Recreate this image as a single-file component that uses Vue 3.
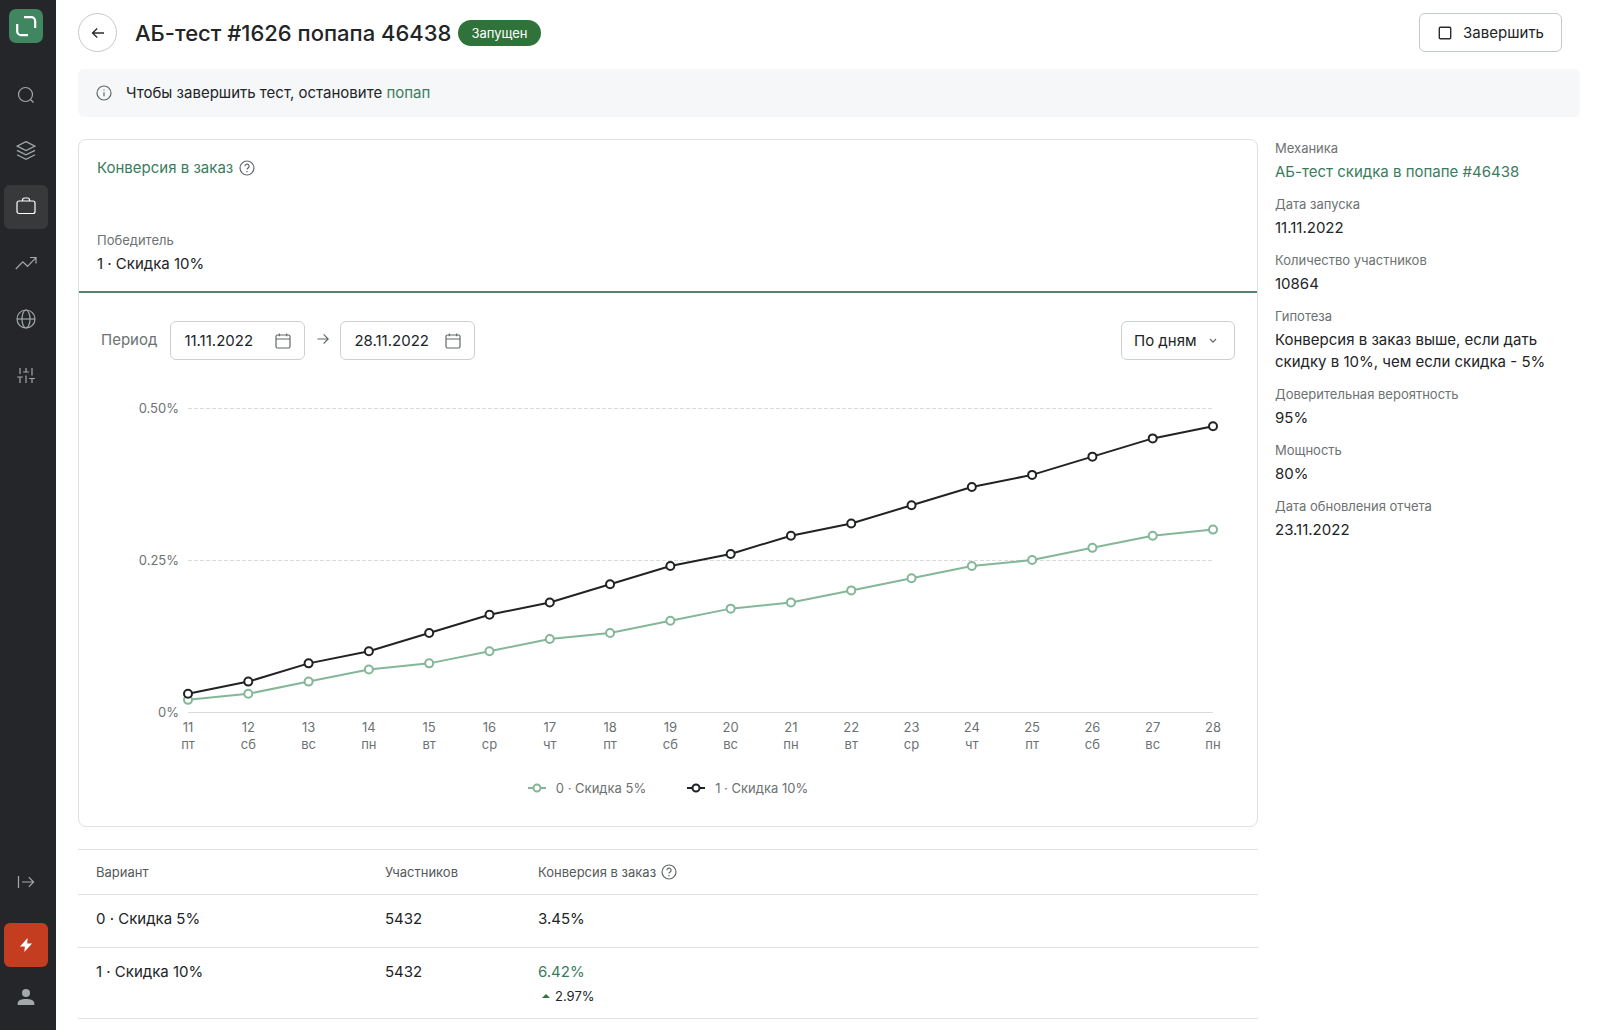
<script setup>
import { ref, computed, onMounted, onBeforeUnmount } from 'vue'

const from = ref('11.11.2022')
const to = ref('28.11.2022')
const grouping = ref('По дням')

const weekdays = ['пт', 'сб', 'вс', 'пн', 'вт', 'ср', 'чт']
const days = Array.from({ length: 18 }, (_, i) => ({ date: 11 + i, name: weekdays[i % 7] }))

const series = [
  {
    name: '0 · Скидка 5%',
    color: '#84b798',
    values: [2, 3, 5, 7, 8, 10, 12, 13, 15, 17, 18, 20, 22, 24, 25, 27, 29, 30],
  },
  {
    name: '1 · Скидка 10%',
    color: '#202224',
    values: [3, 5, 8, 10, 13, 16, 18, 21, 24, 26, 29, 31, 34, 37, 39, 42, 45, 47],
  },
]

const details = [
  { label: 'Механика', value: 'АБ-тест скидка в попапе #46438', link: true },
  { label: 'Дата запуска', value: '11.11.2022' },
  { label: 'Количество участников', value: '10864' },
  { label: 'Гипотеза', value: 'Конверсия в заказ выше, если дать скидку в 10%, чем если скидка - 5%' },
  { label: 'Доверительная вероятность', value: '95%' },
  { label: 'Мощность', value: '80%' },
  { label: 'Дата обновления отчета', value: '23.11.2022' },
]

// The plot is redrawn whenever its container changes width.
const chartBox = ref(null)
const chartWidth = ref(1134)
const plot = { left: 87, right: 22, top: 20, bottom: 324 }

let observer
onMounted(() => {
  chartWidth.value = chartBox.value.clientWidth
  observer = new ResizeObserver(() => {
    chartWidth.value = chartBox.value.clientWidth
  })
  observer.observe(chartBox.value)
})
onBeforeUnmount(() => observer.disconnect())

const plotEnd = computed(() => chartWidth.value - plot.right)
const x = (i) => plot.left + ((plotEnd.value - plot.left) * i) / (days.length - 1)
const y = (v) => plot.bottom - ((plot.bottom - plot.top) * v) / 50
const line = (values) => values.map((v, i) => `${x(i)},${y(v)}`).join(' ')

const ticks = [
  { value: 50, label: '0.50%' },
  { value: 25, label: '0.25%' },
  { value: 0, label: '0%' },
]
</script>

<template>
  <div class="app">
    <aside class="sidebar">
      <a class="logo" href="#" aria-label="Главная">
        <svg width="34" height="34" viewBox="0 0 34 34" fill="none" stroke="#fff" stroke-width="2.2">
          <path d="M15 8.2h7.2a4 4 0 0 1 4 4V19" />
          <path d="M8.2 15v7.2a4 4 0 0 0 4 4H19" />
        </svg>
      </a>
      <nav class="nav">
        <a class="nav-item" href="#" aria-label="Поиск">
          <svg width="20" height="20" viewBox="0 0 20 20"><circle cx="9.5" cy="9.5" r="7" /><path d="M14.5 14.5l3 3" /></svg>
        </a>
        <a class="nav-item" href="#" aria-label="Слои">
          <svg width="20" height="20" viewBox="0 0 20 20"><path d="M10 .6l9 4.5-9 4.5-9-4.5z M1 9.4l9 4.5 9-4.5 M1 13.8l9 4.5 9-4.5" /></svg>
        </a>
        <a class="nav-item active" href="#" aria-label="Кампании">
          <svg width="20" height="20" viewBox="0 0 20 20"><rect x="1" y="4" width="18" height="12.5" rx="2" /><path d="M6.5 4V3a2 2 0 0 1 2-2h3a2 2 0 0 1 2 2v1" /></svg>
        </a>
        <a class="nav-item" href="#" aria-label="Аналитика">
          <svg width="22" height="20" viewBox="0 0 22 20"><path d="M.8 16l7-7.2 4.7 4.5L21 4.6 M15 4.5h6v6" /></svg>
        </a>
        <a class="nav-item" href="#" aria-label="Сайты">
          <svg width="20" height="20" viewBox="0 0 20 20"><circle cx="10" cy="10" r="9" /><ellipse cx="10" cy="10" rx="4" ry="9" /><path d="M1 10h18" /></svg>
        </a>
        <a class="nav-item" href="#" aria-label="Настройки">
          <svg width="20" height="20" viewBox="0 0 20 20"><path d="M4 3v6 M4 12v6 M1.2 12h5.6 M10 3v4 M7.2 7h5.6 M10 10.5V18 M16 3v7.5 M16 13.5V18 M13.2 13.5h5.6" /></svg>
        </a>
      </nav>
      <div class="nav-bottom">
        <button class="nav-item" type="button" aria-label="Развернуть меню">
          <svg width="18" height="18" viewBox="0 0 18 18"><path d="M1.5 3v12 M5 9h11.5 M11.8 4.2L16.6 9l-4.8 4.8" /></svg>
        </button>
        <button class="nav-item alert" type="button" aria-label="События">
          <svg width="14" height="16" viewBox="0 0 14 16"><path d="M8.6 1L1 9.4h4.8L5.4 15 13 6.6H8.2z" /></svg>
        </button>
        <button class="nav-item person" type="button" aria-label="Профиль">
          <svg width="18" height="18" viewBox="0 0 18 18"><circle cx="9" cy="5" r="4" /><path d="M.7 17v-1.6C.7 12.2 4.8 11 9 11s8.3 1.2 8.3 4.4V17z" /></svg>
        </button>
      </div>
    </aside>

    <main class="main">
      <header class="header">
        <a class="back" href="#" aria-label="Назад">
          <svg width="14" height="12" viewBox="0 0 14 12" class="ico dark"><path d="M13 6H1.5 M6.2 1.4L1.5 6l4.7 4.6" /></svg>
        </a>
        <h1>АБ-тест #1626 попапа 46438</h1>
        <span class="badge">Запущен</span>
        <button class="finish" type="button">
          <svg width="14" height="14" viewBox="0 0 14 14" class="ico dark"><rect x="1.3" y="1.3" width="11.4" height="11.4" rx="1" /></svg>
          Завершить
        </button>
      </header>

      <div class="notice">
        <svg width="16" height="16" viewBox="0 0 16 16" class="ico"><circle cx="8" cy="8" r="7" /><path d="M8 7.2v4 M8 4.4v1.2" /></svg>
        <p>Чтобы завершить тест, остановите <a href="#">попап</a></p>
      </div>

      <div class="columns">
        <div class="report">
          <section class="card">
            <div class="metric">
              <h2>
                <a href="#">Конверсия в заказ</a>
                <svg width="16" height="16" viewBox="0 0 16 16" class="ico"><circle cx="8" cy="8" r="7" /><path d="M5.9 6.3a2.1 2.1 0 1 1 3.1 1.8c-.7.4-1 .7-1 1.4 M8 11.1v1.1" /></svg>
              </h2>
              <div class="winner">
                <span class="label">Победитель</span>
                <span class="value">1 · Скидка 10%</span>
              </div>
            </div>

            <div class="graph">
              <div class="filters">
                <label class="period" for="date-from">Период</label>
                <span class="date">
                  <input id="date-from" v-model="from" type="text" />
                  <svg width="16" height="16" viewBox="0 0 16 16" class="ico"><rect x="1" y="2" width="14" height="13" rx="1.5" /><path d="M1 6h14 M4.3 .6v2.6 M11.7 .6v2.6" /></svg>
                </span>
                <svg width="12" height="12" viewBox="0 0 12 12" class="ico arrow"><path d="M.5 6h10.6 M6.6 1.4L11.2 6l-4.6 4.6" /></svg>
                <span class="date">
                  <input v-model="to" type="text" aria-label="Конец периода" />
                  <svg width="16" height="16" viewBox="0 0 16 16" class="ico"><rect x="1" y="2" width="14" height="13" rx="1.5" /><path d="M1 6h14 M4.3 .6v2.6 M11.7 .6v2.6" /></svg>
                </span>
                <span class="grouping">
                  <select v-model="grouping" aria-label="Группировка">
                    <option>По дням</option>
                    <option>По неделям</option>
                  </select>
                  <svg width="8" height="6" viewBox="0 0 8 6" class="ico"><path d="M1 1l3 3.2L7 1" /></svg>
                </span>
              </div>

              <div ref="chartBox" class="chart">
                <svg :width="chartWidth" height="370" role="img" aria-label="Конверсия в заказ по дням">
                  <g v-for="t in ticks" :key="t.value">
                    <line :x1="plot.left" :x2="plotEnd" :y1="y(t.value) + 0.5" :y2="y(t.value) + 0.5" :class="t.value ? 'grid' : 'axis'" />
                    <text :x="plot.left - 9" :y="y(t.value) + 5" text-anchor="end">{{ t.label }}</text>
                  </g>
                  <g v-for="(d, i) in days" :key="d.date">
                    <text :x="x(i)" :y="plot.bottom + 20" text-anchor="middle">{{ d.date }}</text>
                    <text :x="x(i)" :y="plot.bottom + 37" text-anchor="middle">{{ d.name }}</text>
                  </g>
                  <g v-for="s in series" :key="s.name" :stroke="s.color" stroke-width="2">
                    <polyline :points="line(s.values)" fill="none" />
                    <circle v-for="(v, i) in s.values" :key="i" :cx="x(i)" :cy="y(v)" r="4" fill="#fff" />
                  </g>
                </svg>
              </div>

              <ul class="legend">
                <li v-for="s in series" :key="s.name">
                  <svg width="18" height="10" viewBox="0 0 18 10" :stroke="s.color" stroke-width="2"><path d="M0 5h18" /><circle cx="9" cy="5" r="3.5" fill="#fff" /></svg>
                  {{ s.name }}
                </li>
              </ul>
            </div>
          </section>

          <table class="results">
            <thead>
              <tr>
                <th class="col-variant" scope="col">Вариант</th>
                <th class="col-count" scope="col">Участников</th>
                <th scope="col">
                  <span class="th-help">
                    Конверсия в заказ
                    <svg width="16" height="16" viewBox="0 0 16 16" class="ico"><circle cx="8" cy="8" r="7" /><path d="M5.9 6.3a2.1 2.1 0 1 1 3.1 1.8c-.7.4-1 .7-1 1.4 M8 11.1v1.1" /></svg>
                  </span>
                </th>
              </tr>
            </thead>
            <tbody>
              <tr>
                <td>0 · Скидка 5%</td>
                <td>5432</td>
                <td>3.45%</td>
              </tr>
              <tr>
                <td>1 · Скидка 10%</td>
                <td>5432</td>
                <td>
                  <span class="win">6.42%</span>
                  <span class="delta">
                    <svg width="8" height="4" viewBox="0 0 8 4"><path d="M4 0l4 4H0z" fill="#33723f" /></svg>
                    2.97%
                  </span>
                </td>
              </tr>
            </tbody>
          </table>
        </div>

        <dl class="details">
          <div v-for="d in details" :key="d.label">
            <dt>{{ d.label }}</dt>
            <dd>
              <a v-if="d.link" href="#">{{ d.value }}</a>
              <template v-else>{{ d.value }}</template>
            </dd>
          </div>
        </dl>
      </div>
    </main>
  </div>
</template>

<style>
body {
  background: #fff;
}
</style>

<style scoped>
* {
  box-sizing: border-box;
}

.app {
  display: flex;
  min-height: 100vh;
  font-family: Inter, "Liberation Sans", sans-serif;
  font-size: 15px;
  line-height: 22px;
  color: #222426;
}

h1, h2, p, ul, dl, dd {
  margin: 0;
  padding: 0;
  font-weight: 400;
}

a {
  color: #3b7c5d;
  text-decoration: none;
}

button, input, select {
  font: inherit;
  color: inherit;
}

svg {
  display: block;
  flex: none;
}

.ico {
  fill: none;
  stroke: #62686a;
  stroke-width: 1.2;
}

.ico.dark {
  stroke: #2a2c2e;
  stroke-width: 1.4;
}

.sidebar {
  position: sticky;
  top: 0;
  display: flex;
  flex: none;
  flex-direction: column;
  width: 56px;
  height: 100vh;
  padding: 9px 8px 11px 4px;
  background: #242629;
}

.logo {
  align-self: center;
  margin-bottom: 30px;
  border-radius: 7px;
  background: #3f8661;
}

.nav {
  display: flex;
  flex-direction: column;
  gap: 12px;
}

.nav-item {
  display: flex;
  align-items: center;
  justify-content: center;
  width: 44px;
  height: 44px;
  padding: 0;
  border: 0;
  border-radius: 6px;
  background: none;
}

.nav-item svg {
  fill: none;
  stroke: #a5a8aa;
  stroke-width: 1.2;
}

.nav-item.active {
  background: #37393b;
}

.nav-item.active svg {
  stroke: #fff;
}

.nav-bottom {
  display: flex;
  flex-direction: column;
  gap: 8px;
  margin-top: auto;
}

.nav-item.alert {
  margin-top: 11px;
  background: #c43d20;
}

.nav-item.alert svg {
  fill: #fff;
  stroke: none;
}

.nav-item.person svg {
  fill: #a5a8aa;
  stroke: none;
}

.main {
  flex: 1;
  min-width: 0;
  padding: 13px 19px 13px 22px;
}

.header {
  display: flex;
  align-items: center;
  padding-right: 18px;
}

.back {
  display: flex;
  align-items: center;
  justify-content: center;
  width: 39px;
  height: 39px;
  margin-right: 18px;
  border: 1px solid #c3cbc9;
  border-radius: 50%;
}

h1 {
  font-size: 22px;
  font-weight: 500;
  line-height: 30px;
}

.badge {
  margin-left: 7px;
  padding: 0 13px;
  border-radius: 13px;
  background: #30733a;
  color: #fff;
  font-size: 13px;
  line-height: 26px;
}

.finish {
  display: flex;
  align-items: center;
  gap: 11px;
  height: 39px;
  margin-left: auto;
  padding: 0 17px 0 18px;
  border: 1px solid #c3cbc9;
  border-radius: 6px;
  background: #fff;
}

.notice {
  display: flex;
  align-items: center;
  gap: 14px;
  margin-top: 17px;
  padding: 13px 18px;
  border-radius: 6px;
  background: #f5f7f8;
}

.columns {
  display: flex;
  gap: 17px;
  margin-top: 22px;
}

.report {
  flex: 1;
  min-width: 0;
}

.card {
  border: 1px solid #dde1e1;
  border-radius: 8px;
}

.metric {
  padding: 17px 18px 16px;
  border-bottom: 2px solid #578470;
}

h2 {
  display: flex;
  align-items: center;
  gap: 6px;
  font-size: 15px;
}

.winner {
  display: flex;
  flex-direction: column;
  gap: 3px;
  margin-top: 51px;
}

.label {
  color: #6c7273;
  font-size: 13px;
  line-height: 20px;
}

.graph {
  padding: 28px 22px;
}

.filters {
  display: flex;
  align-items: center;
}

.period {
  margin-right: 13px;
  padding-bottom: 2px;
  color: #6c7273;
}

.date {
  display: flex;
  align-items: center;
  width: 135px;
  height: 39px;
  padding: 0 13px;
  border: 1px solid #cbd0d0;
  border-radius: 6px;
}

.date input {
  flex: 1;
  width: 0;
  padding: 0;
  border: 0;
  outline: 0;
  background: none;
}

.arrow {
  margin: 0 11px 4px 12px;
}

.grouping {
  position: relative;
  display: flex;
  align-items: center;
  margin-left: auto;
}

.grouping select {
  width: 114px;
  height: 39px;
  padding: 0 12px;
  border: 1px solid #cbd0d0;
  border-radius: 6px;
  background: #fff;
  appearance: none;
}

.grouping svg {
  position: absolute;
  right: 18px;
  pointer-events: none;
}

.chart {
  margin-top: 28px;
  overflow: hidden;
}

.chart text {
  fill: #6c7273;
  font-size: 13px;
}

.grid {
  stroke: #d8dddc;
  stroke-dasharray: 4 2;
}

.axis {
  stroke: #d8dddc;
}

.legend {
  display: flex;
  justify-content: center;
  gap: 41px;
  margin-top: 20px;
  color: #6c7273;
  font-size: 13px;
  line-height: 20px;
  list-style: none;
}

.legend li {
  display: flex;
  align-items: center;
  gap: 10px;
}

.results {
  width: 100%;
  margin-top: 22px;
  border-collapse: collapse;
  border-top: 1px solid #dde2e2;
}

.results tr {
  border-bottom: 1px solid #dde2e2;
}

.results th {
  padding: 12px 18px;
  color: #54595b;
  font-size: 13px;
  font-weight: 400;
  line-height: 20px;
  text-align: left;
}

.results td {
  padding: 13px 18px 17px;
  vertical-align: top;
}

.results td:not(:first-child),
.results th:not(:first-child) {
  padding-left: 0;
}

.results td:last-child {
  padding-bottom: 13px;
}

.col-variant {
  width: 307px;
}

.col-count {
  width: 153px;
}

.th-help {
  display: flex;
  align-items: center;
  gap: 5px;
}

.win {
  display: block;
  color: #3b7c5d;
}

.delta {
  display: flex;
  align-items: center;
  gap: 5px;
  margin-top: 4px;
  padding-left: 4px;
  font-size: 13px;
  line-height: 18px;
}

.details {
  display: flex;
  flex: none;
  flex-direction: column;
  gap: 12px;
  width: 305px;
}

.details dt {
  padding-bottom: 4px;
  color: #6c7273;
  font-size: 13px;
  line-height: 18px;
}

.details dd {
  max-width: 280px;
}
</style>
